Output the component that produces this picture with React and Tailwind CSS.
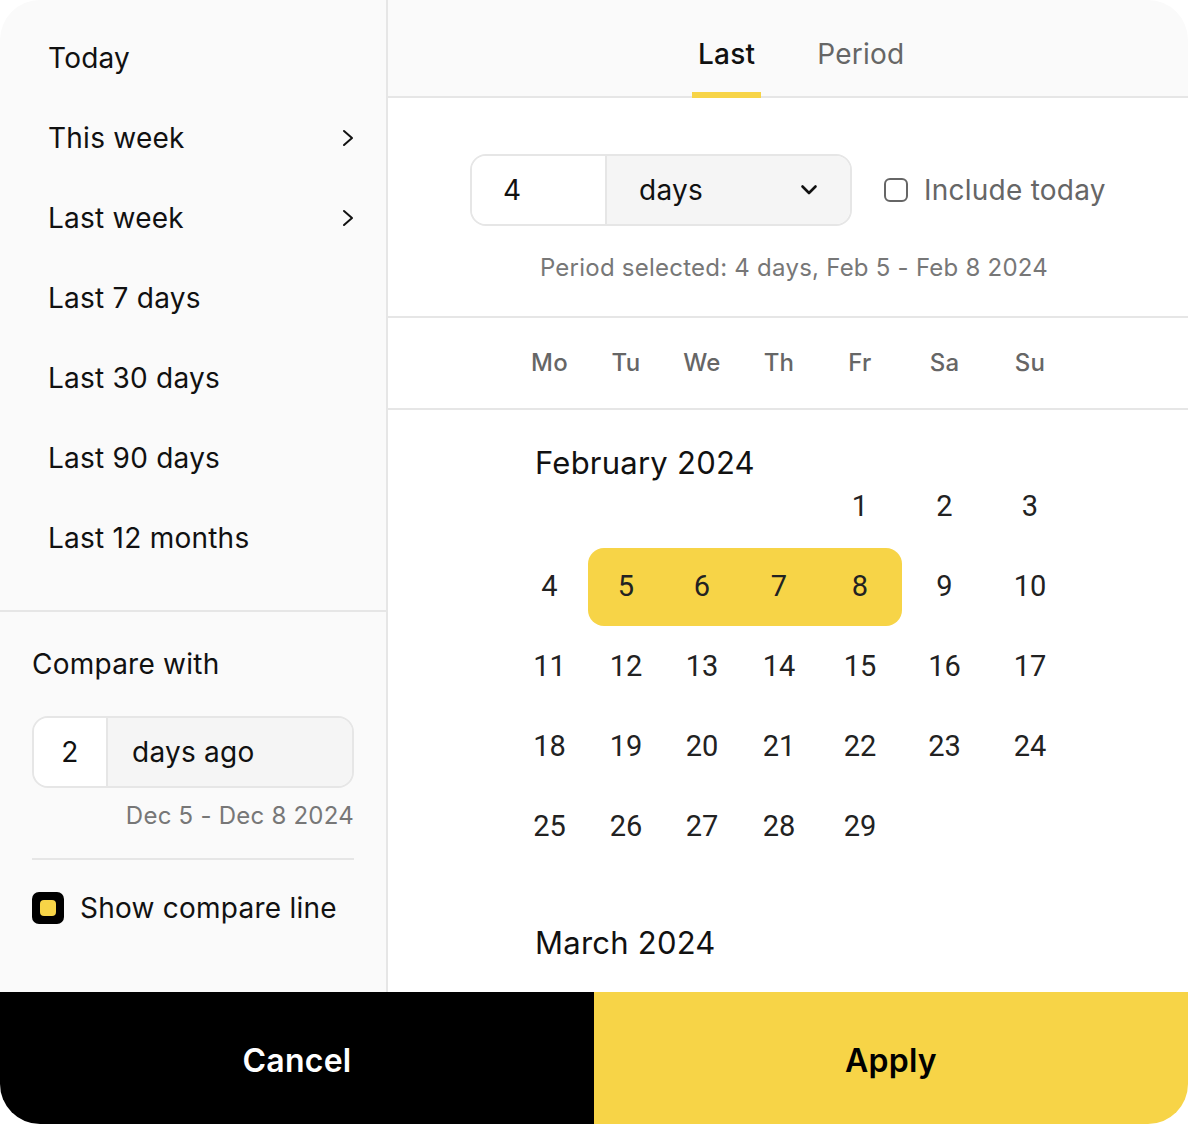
import React from "react";

const presets = [
  { label: "Today" },
  { label: "This week", arrow: true },
  { label: "Last week", arrow: true },
  { label: "Last 7 days" },
  { label: "Last 30 days" },
  { label: "Last 90 days" },
  { label: "Last 12 months" },
];

const weekdays = ["Mo", "Tu", "We", "Th", "Fr", "Sa", "Su"];
const gridCols = "grid grid-cols-[77px_76px_76px_78px_84px_85px_86px]";
const sans = "font-['Inter','Open_Sans',sans-serif] tracking-[0.015em]";

function buildMonth(offset, days) {
  const cells = [];
  for (let i = 0; i < offset; i++) cells.push(null);
  for (let d = 1; d <= days; d++) cells.push(d);
  return cells;
}

// march rows are below the fold, only the heading shows
const months = [
  { title: "February 2024", cells: buildMonth(4, 29) },
  { title: "March 2024", cells: [] },
];

const selected = [5, 6, 7, 8];

function ChevronRight() {
  return (
    <svg width="12" height="18" viewBox="0 0 12 18" fill="none">
      <path d="M2 2l8 7-8 7" stroke="#111" strokeWidth="2" strokeLinecap="round" strokeLinejoin="round" />
    </svg>
  );
}

function ChevronDown() {
  return (
    <svg width="18" height="12" viewBox="0 0 18 12" fill="none">
      <path d="M2.5 2.5L9 9l6.5-6.5" stroke="#111" strokeWidth="2.6" strokeLinecap="round" strokeLinejoin="round" />
    </svg>
  );
}

function MonthBlock({ month, first }) {
  return (
    <div className={first ? "" : "mt-[56px]"}>
      <div className="-mb-[16px] pl-[24px] text-[31px] leading-[40px] text-[#111]">{month.title}</div>
      <div className={gridCols}>
        {month.cells.map((d, i) => {
          const on = first && selected.includes(d);
          let round = "";
          if (on && d === 5) round = "rounded-l-[16px]";
          if (on && d === 8) round = "rounded-r-[16px]";
          return (
            <div key={i} className="flex h-[80px] items-center">
              <div
                className={`flex h-[78px] w-full items-center justify-center font-['Roboto',sans-serif] text-[29px] tracking-normal text-[#222] ${on ? "bg-[#f7d447]" : ""} ${round}`}
              >
                {d}
              </div>
            </div>
          );
        })}
      </div>
    </div>
  );
}

export default function App() {
  return (
    <div className={`${sans} flex h-[1124px] w-[1188px] flex-col overflow-hidden rounded-[40px] bg-white`}>
      <div className="flex h-[992px]">
        <aside className="flex w-[388px] flex-col border-r-2 border-[#e6e6e6] bg-[#fafafa]">
          <div className="border-b-2 border-[#e6e6e6] pt-[18px] pb-[32px]">
            {presets.map((p) => (
              <div key={p.label} className="flex h-[80px] items-center justify-between pl-[48px] pr-[32px] text-[28px] text-[#111]">
                <span>{p.label}</span>
                {p.arrow && <ChevronRight />}
              </div>
            ))}
          </div>
          <div className="px-[32px] pt-[32px]">
            <p className="text-[28px] leading-[40px] text-[#111]">Compare with</p>
            <div className="mt-[32px] flex h-[72px] overflow-hidden rounded-[16px] border-2 border-[#e6e6e6]">
              <div className="flex w-[74px] items-center justify-center border-r-2 border-[#e6e6e6] bg-white text-[28px] text-[#111]">2</div>
              <div className="flex flex-1 items-center bg-[#f5f5f5] pl-[24px] text-[28px] text-[#111]">days ago</div>
            </div>
            <p className="mt-[12px] text-right text-[24px] leading-[32px] text-[#777]">Dec 5 - Dec 8 2024</p>
            <div className="mt-[26px] border-t-2 border-[#e6e6e6]" />
            <div className="mt-[27px] flex items-center gap-[16px]">
              <div className="flex h-[32px] w-[32px] items-center justify-center rounded-[7px] bg-black">
                <div className="h-[16px] w-[16px] rounded-[4px] bg-[#f7d447]" />
              </div>
              <span className="text-[28px] text-[#111]">Show compare line</span>
            </div>
          </div>
        </aside>

        <main className="flex flex-1 flex-col overflow-hidden">
          <div className="flex h-[98px] shrink-0 border-b-2 border-[#e6e6e6] bg-[#fafafa] pl-[304px]">
            <div className="relative flex h-full items-center px-[6px] pt-[12px] text-[28px] font-medium text-[#111]">
              Last
              <div className="absolute -bottom-[2px] left-0 right-0 h-[6px] bg-[#f7d447]" />
            </div>
            <div className="ml-[48px] flex h-full items-center px-[8px] pt-[12px] text-[28px] text-[#666]">Period</div>
          </div>

          <div className="shrink-0 border-b-2 border-[#e6e6e6] pb-[32px]">
            <div className="mt-[56px] flex items-center pl-[82px]">
              <div className="flex h-[72px] w-[382px] overflow-hidden rounded-[16px] border-2 border-[#e6e6e6]">
                <div className="flex w-[135px] items-center border-r-2 border-[#e6e6e6] bg-white pl-[31px] text-[28px] text-[#111]">4</div>
                <div className="flex flex-1 items-center justify-between bg-[#f5f5f5] pl-[32px] pr-[32px] text-[28px] text-[#111]">
                  <span>days</span>
                  <ChevronDown />
                </div>
              </div>
              <div className="ml-[32px] flex items-center gap-[16px]">
                <div className="h-[24px] w-[24px] rounded-[6px] border-2 border-[#666]" />
                <span className="text-[28px] text-[#666]">Include today</span>
              </div>
            </div>
            <p className="mt-[26px] pl-[12px] text-center text-[24px] leading-[32px] text-[#777]">
              Period selected: 4 days, Feb 5 - Feb 8 2024
            </p>
          </div>

          <div className="shrink-0 border-b-2 border-[#e6e6e6] pl-[123px]">
            <div className={`${gridCols} h-[90px] items-center`}>
              {weekdays.map((w) => (
                <div key={w} className="text-center text-[24px] font-medium text-[#666]">{w}</div>
              ))}
            </div>
          </div>

          <div className="pl-[123px] pt-[33px]">
            {months.map((m, i) => (
              <MonthBlock key={m.title} month={m} first={i === 0} />
            ))}
          </div>
        </main>
      </div>

      <div className="flex h-[132px] shrink-0">
        <button className="flex w-[594px] items-center justify-center bg-black pt-[6px] text-[32px] font-semibold text-white">Cancel</button>
        <button className="flex flex-1 items-center justify-center bg-[#f7d447] pt-[6px] text-[32px] font-semibold text-black">Apply</button>
      </div>
    </div>
  );
}
